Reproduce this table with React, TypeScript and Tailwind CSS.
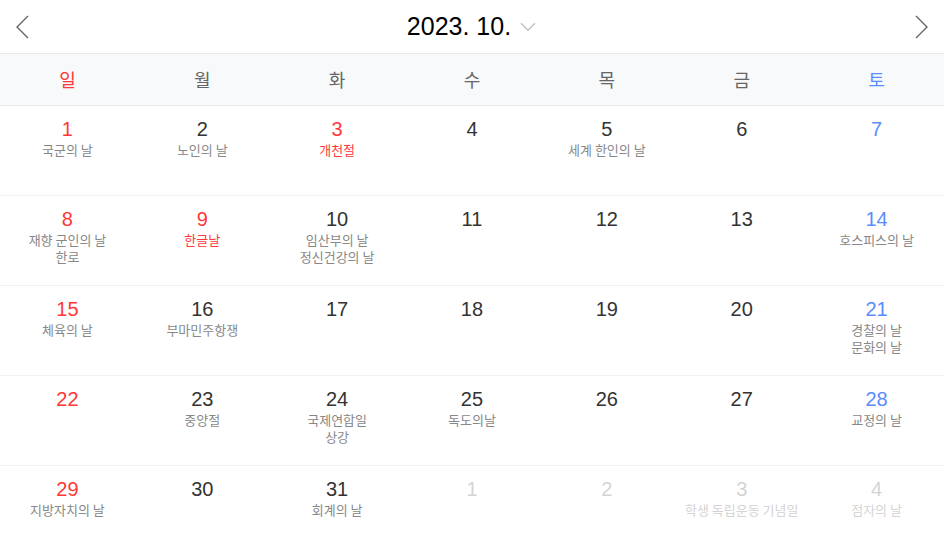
import { ChevronDown } from 'lucide-react';

type Day = { d: number; notes?: string[]; holiday?: boolean; other?: boolean };

const WEEKDAYS = ['일', '월', '화', '수', '목', '금', '토'];

const WEEKS: Day[][] = [
  [
    { d: 1, notes: ['국군의 날'] },
    { d: 2, notes: ['노인의 날'] },
    { d: 3, notes: ['개천절'], holiday: true },
    { d: 4 },
    { d: 5, notes: ['세계 한인의 날'] },
    { d: 6 },
    { d: 7 },
  ],
  [
    { d: 8, notes: ['재향 군인의 날', '한로'] },
    { d: 9, notes: ['한글날'], holiday: true },
    { d: 10, notes: ['임산부의 날', '정신건강의 날'] },
    { d: 11 },
    { d: 12 },
    { d: 13 },
    { d: 14, notes: ['호스피스의 날'] },
  ],
  [
    { d: 15, notes: ['체육의 날'] },
    { d: 16, notes: ['부마민주항쟁'] },
    { d: 17 },
    { d: 18 },
    { d: 19 },
    { d: 20 },
    { d: 21, notes: ['경찰의 날', '문화의 날'] },
  ],
  [
    { d: 22 },
    { d: 23, notes: ['중양절'] },
    { d: 24, notes: ['국제연합일', '상강'] },
    { d: 25, notes: ['독도의날'] },
    { d: 26 },
    { d: 27 },
    { d: 28, notes: ['교정의 날'] },
  ],
  [
    { d: 29, notes: ['지방자치의 날'] },
    { d: 30 },
    { d: 31, notes: ['회계의 날'] },
    { d: 1, other: true },
    { d: 2, other: true },
    { d: 3, notes: ['학생 독립운동 기념일'], other: true },
    { d: 4, notes: ['점자의 날'], other: true },
  ],
];

function numColor(col: number, day: Day) {
  if (day.other) return 'text-[#d4d4d4]';
  if (col === 0 || day.holiday) return 'text-[#ff3838]';
  if (col === 6) return 'text-[#5b8cff]';
  return 'text-[#333]';
}

function noteColor(day: Day) {
  if (day.other) return 'text-[#d4d4d4]';
  if (day.holiday) return 'text-[#ff3838]';
  return 'text-[#888]';
}

function Arrow({ dir }: { dir: 'left' | 'right' }) {
  return (
    <svg width="14" height="24" viewBox="0 0 14 24" fill="none">
      <polyline
        points={dir === 'left' ? '13,1 2,12 13,23' : '1,1 12,12 1,23'}
        stroke="#666"
        strokeWidth="1.4"
      />
    </svg>
  );
}

export default function App() {
  return (
    <div className="w-[944px] h-[549px] overflow-hidden bg-white font-['Liberation_Sans','Noto_Sans_CJK_KR',sans-serif]">
      <div className="h-[53px] flex items-center justify-between px-[15px]">
        <Arrow dir="left" />
        <div className="flex items-center gap-[4px] pl-[4px]">
          <span className="text-[25px] text-black">2023. 10.</span>
          <ChevronDown size={26} strokeWidth={1.6} className="text-[#c4c4c4]" />
        </div>
        <Arrow dir="right" />
      </div>
      <div className="grid grid-cols-7 h-[53px] bg-[#f8f9fb] border-y border-[#e8eaee]">
        {WEEKDAYS.map((w, i) => (
          <div
            key={w}
            className={`flex items-center justify-center text-[18px] font-['Noto_Sans_CJK_KR',sans-serif] ${
              i === 0 ? 'text-[#ff3838]' : i === 6 ? 'text-[#5b8cff]' : 'text-[#666]'
            }`}
          >
            {w}
          </div>
        ))}
      </div>
      {WEEKS.map((week, r) => (
        <div key={r} className="grid grid-cols-7 h-[90px] border-b border-[#f0f1f3]">
          {week.map((day, c) => (
            <div key={c} className="flex flex-col items-center pt-[11px]">
              <span className={`text-[20px] leading-[24px] ${numColor(c, day)}`}>{day.d}</span>
              {day.notes && (
                <p
                  className={`text-center whitespace-pre-line text-[13px] leading-[17px] font-['Noto_Sans_CJK_KR',sans-serif] ${noteColor(day)}`}
                >
                  {day.notes.join('\n')}
                </p>
              )}
            </div>
          ))}
        </div>
      ))}
    </div>
  );
}
